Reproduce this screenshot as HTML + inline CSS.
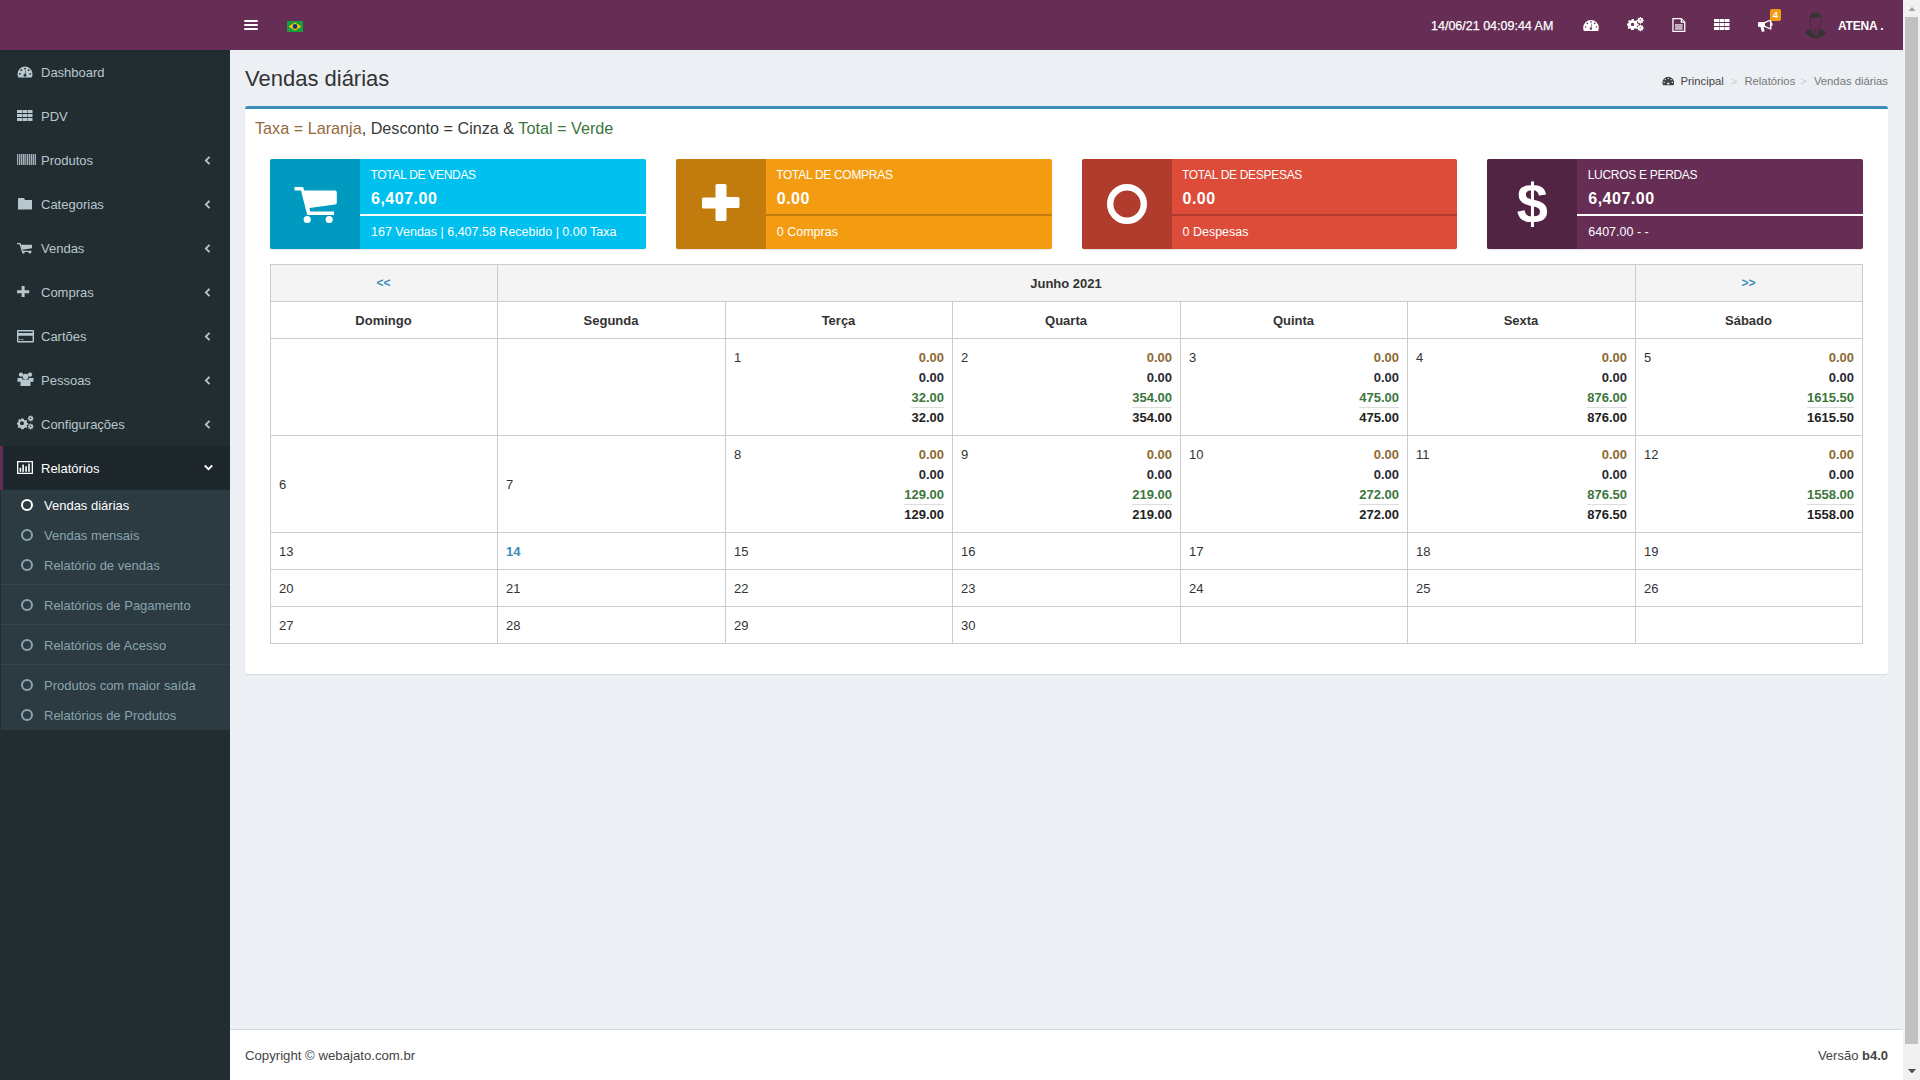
<!DOCTYPE html>
<html><head><meta charset="utf-8">
<style>
*{box-sizing:border-box;margin:0;padding:0}
html,body{width:1920px;height:1080px;overflow:hidden;background:#ecf0f5;font-family:"Liberation Sans",sans-serif;color:#333}
.abs{position:absolute}
#hdr{position:absolute;left:0;top:0;width:1903px;height:50px;background:#662d55}
#side{position:absolute;left:0;top:50px;width:230px;height:1030px;background:#222d32}
#content{position:absolute;left:230px;top:50px;width:1673px;height:979px;background:#ecf0f5}
#foot{position:absolute;left:230px;top:1029px;width:1673px;height:51px;background:#fff;border-top:1px solid #d2d6de}
#sb{position:absolute;left:1903px;top:0;width:17px;height:1080px;background:#f1f1f1}
#sb .th{position:absolute;left:2px;top:17px;width:13px;height:1027px;background:#c1c1c1}
.mi{position:absolute;left:0;width:230px;height:44px;color:#b8c7ce;font-size:13px}
.mi .t{position:absolute;left:41px;top:16px;line-height:14px}
.mi svg.ic{position:absolute;left:17px}
.mi .ang{position:absolute;left:204px;top:18px}
.sub{position:absolute;left:-1px;width:230px;height:30px;color:#8aa4af;font-size:13px}
.sub .t{position:absolute;left:44px;top:9px;line-height:14px}
.sub .c{position:absolute;left:21px;top:9px;width:12px;height:12px;border:2px solid #8aa4af;border-radius:50%}
.ib{position:absolute;top:159px;width:375.75px;height:90px;border-radius:2px;color:#fff;box-shadow:0 1px 1px rgba(0,0,0,.1)}
.ib .icn{position:absolute;left:0;top:0;width:90px;height:90px;background:rgba(0,0,0,.2);border-radius:2px 0 0 2px}
.ib .tx{position:absolute;left:100.5px;top:9px;font-size:12px;letter-spacing:-.3px;line-height:14px;white-space:nowrap}
.ib .num{position:absolute;left:101px;top:31px;font-size:16px;font-weight:bold;letter-spacing:.5px;line-height:18px}
.ib .pb{position:absolute;left:90px;top:55px;right:0;height:2px;background:rgba(0,0,0,.2)}
.ib .pb.w{background:#fff}
.ib .ds{position:absolute;left:101px;top:66px;font-size:12.5px;line-height:14px;white-space:nowrap}
.ct{font-size:13px;line-height:20px;color:#333;white-space:nowrap}
.vals{font-size:13px;line-height:20px;font-weight:bold;text-align:right}
.vals .tot{display:inline-block;border-top:1px solid #ddd;line-height:19px;color:#222}
.vals .g{line-height:19px;color:#3c763d}
.vals .o{color:#8c6a32}
.vals .k{color:#2a2a35}
</style></head>
<body>
<div id="hdr">
  <!-- hamburger -->
  <div class="abs" style="left:244px;top:20px;width:14px;height:2px;background:#fff;border-radius:1px"></div>
  <div class="abs" style="left:244px;top:24px;width:14px;height:2px;background:#fff;border-radius:1px"></div>
  <div class="abs" style="left:244px;top:28px;width:14px;height:2px;background:#fff;border-radius:1px"></div>
  <!-- flag -->
  <svg class="abs" style="left:287px;top:21px" width="16" height="11" viewBox="0 0 16 11"><rect width="16" height="11" fill="#169b3e"/><path d="M8 1.5 L14.3 5.5 L8 9.5 L1.7 5.5Z" fill="#fbd000"/><circle cx="8" cy="5.5" r="2.4" fill="#1a2f8a"/></svg>
  <div class="abs" style="left:1431px;top:19px;font-size:12.5px;color:#fff;line-height:14px;-webkit-text-stroke:.25px #fff">14/06/21 04:09:44 AM</div>
  <svg class="abs" style="left:1583px;top:20px" width="16" height="11" viewBox="0 0 16 11"><path d="M8 0A7.8 7.8 0 0 0 .2 7.8c0 1.1.2 2.1.6 3.2h14.4c.4-1.1.6-2.1.6-3.2A7.8 7.8 0 0 0 8 0z" fill="#fff"/><g fill="#662d55"><circle cx="8" cy="1.9" r=".8"/><circle cx="4.3" cy="3.4" r=".8"/><circle cx="11.7" cy="3.4" r=".8"/><circle cx="2.6" cy="7" r=".8"/><circle cx="13.4" cy="7" r=".8"/><circle cx="7.9" cy="8.6" r="1.2"/><path d="M7.5 8.6l1-5.2.4.1-.6 5.2z"/></g></svg>
  <svg class="abs" style="left:1627px;top:17px" width="17" height="15" viewBox="0 0 17 15"><g fill="#fff" fill-rule="evenodd"><path d="M5.4 1.9l1.3.2.4 1.3 1.1.5 1.2-.6 1 .9-.6 1.2.5 1.1 1.3.4v1.4l-1.3.4-.5 1.1.6 1.2-1 .9-1.2-.6-1.1.5-.4 1.3H4.2l-.4-1.3-1.1-.5-1.2.6-.9-.9.6-1.2-.5-1.1L0 8.1V6.7l1.3-.4.5-1.1-.6-1.2.9-.9 1.2.6 1.1-.5.4-1.3zM5.5 5.7a1.7 1.7 0 1 0 .1 3.4A1.7 1.7 0 0 0 5.5 5.7z"/><path d="M13.2 0l.7.1.2.8.7.3.7-.4.6.5-.4.7.3.7.8.2v1l-.8.2-.3.7.4.7-.6.5-.7-.4-.7.3-.2.8h-1l-.2-.8-.7-.3-.7.4-.6-.5.4-.7-.3-.7-.8-.2v-1l.8-.2.3-.7-.4-.7.6-.5.7.4.7-.3.2-.8zM13.2 2.3a.6.6 0 1 0 0 1.2.6.6 0 0 0 0-1.2z"/><path d="M13.2 7.6l.7.1.2.8.7.3.7-.4.6.5-.4.7.3.7.8.2v1l-.8.2-.3.7.4.7-.6.5-.7-.4-.7.3-.2.8h-1l-.2-.8-.7-.3-.7.4-.6-.5.4-.7-.3-.7-.8-.2v-1l.8-.2.3-.7-.4-.7.6-.5.7.4.7-.3.2-.8zm0 2.3a.6.6 0 1 0 0 1.2.6.6 0 0 0 0-1.2z"/></g></svg>
  <svg class="abs" style="left:1672px;top:18px" width="14" height="14" viewBox="0 0 14 14"><path d="M.3 0h9.2l3.9 3.9V14H.3zM1.6 1.3v11.4h10.5V4.7H8.7V1.3zM10 1.9v1.7h1.7z" fill="#fff" fill-rule="evenodd"/><g fill="#fff"><rect x="3" y="6.3" width="7.6" height="1.2"/><rect x="3" y="8.3" width="7.6" height="1.2"/><rect x="3" y="10.3" width="7.6" height="1.2"/></g></svg>
  <svg class="abs" style="left:1714px;top:19px" width="16" height="11" viewBox="0 0 16 11"><g fill="#fff"><rect x="0" y="0" width="5" height="3"/><rect x="5.5" y="0" width="4.5" height="3"/><rect x="10.5" y="0" width="5" height="3"/><rect x="0" y="4" width="5" height="3"/><rect x="5.5" y="4" width="4.5" height="3"/><rect x="10.5" y="4" width="5" height="3"/><rect x="0" y="8" width="5" height="3"/><rect x="5.5" y="8" width="4.5" height="3"/><rect x="10.5" y="8" width="5" height="3"/></g></svg>
  <svg class="abs" style="left:1758px;top:19px" width="16" height="13" viewBox="0 0 16 13"><path d="M12.2 0.4l1.3 0v3.3a1.6 1.6 0 0 1 0 3.1V10.4h-1.3L6.4 8H5.6l.9 3.6a.9.9 0 0 1-.9 1.1H4.4a.9.9 0 0 1-.9-.7L2.6 8H1.2A1.2 1.2 0 0 1 0 6.8V4.2A1.2 1.2 0 0 1 1.2 3h5.2zM11.9 2L7 4.3v2.4l4.9 2.3z" fill="#fff" fill-rule="evenodd"/></svg>
  <div class="abs" style="left:1770px;top:9px;width:11px;height:12px;background:#f39c12;border-radius:2px;color:#fff;font-size:9.5px;font-weight:bold;line-height:12px;text-align:center">4</div>
  <svg class="abs" style="left:1804px;top:12px" width="23" height="27" viewBox="0 0 23 27"><path d="M5.6 8C5 3 7.8.4 11.5.4S18 3 17.4 8c-.4-1.4-1.2-2.4-2.4-2.7-1.6.7-3.6 1-6.2.7-1.5.2-2.6.8-3.2 2z" fill="#353535"/><path d="M6 8c-.4 3 .3 6 2.4 8.2 1.8 1.7 4.4 1.7 6.2 0 2.1-2.2 2.8-5.2 2.4-8.2" stroke="#3b2a36" stroke-width=".7" fill="none"/><path d="M1 20.6c1.2-2 3.4-3 6.2-3.6l4.3 8.4 4.3-8.4c2.8.6 5 1.6 6.2 3.6-2.2 3.3-6 5.6-10.5 5.6S3.2 23.9 1 20.6z" fill="#353535"/><path d="M10.7 18.6l.8 6.8.8-6.8-.8-1z" fill="#4a2a40"/></svg>
  <div class="abs" style="left:1838px;top:19px;font-size:12px;color:#fff;line-height:14px;font-weight:bold;letter-spacing:-.2px;white-space:nowrap">ATENA .</div>
</div>

<div id="side">
<div class="mi" style="top:0px"><svg class="ic" style="top:16px" width="16" height="12" viewBox="0 0 16 12"><path d="M8 0.5A7.5 7.5 0 0 0 0.5 8c0 1.2.3 2.4.8 3.5h13.4c.5-1.1.8-2.3.8-3.5A7.5 7.5 0 0 0 8 0.5z" fill="#b8c7ce"/><circle cx="8" cy="2.6" r="0.9" fill="#222d32"/><circle cx="4.3" cy="4.2" r="0.9" fill="#222d32"/><circle cx="11.7" cy="4.2" r="0.9" fill="#222d32"/><circle cx="2.8" cy="7.8" r="0.9" fill="#222d32"/><circle cx="13.2" cy="7.8" r="0.9" fill="#222d32"/><circle cx="8" cy="9.3" r="1.4" fill="#222d32"/><path d="M7.6 9.2 L8.7 3.8 L9 3.9 L8.5 9.3Z" fill="#222d32"/></svg><span class="t">Dashboard</span></div>
<div class="mi" style="top:44px"><svg class="ic" style="top:16px" width="16" height="12" viewBox="0 0 16 12"><g fill="#b8c7ce"><rect x="0" y="0" width="5" height="3"/><rect x="5.5" y="0" width="4.5" height="3"/><rect x="10.5" y="0" width="5" height="3"/><rect x="0" y="4" width="5" height="3"/><rect x="5.5" y="4" width="4.5" height="3"/><rect x="10.5" y="4" width="5" height="3"/><rect x="0" y="8" width="5" height="3"/><rect x="5.5" y="8" width="4.5" height="3"/><rect x="10.5" y="8" width="5" height="3"/></g></svg><span class="t">PDV</span></div>
<div class="mi" style="top:88px"><svg class="ic" style="top:16px" width="19" height="12" viewBox="0 0 19 12"><g fill="#b8c7ce" opacity="0.85"><rect x="0" y="0" width="1" height="11"/><rect x="1.8" y="0" width="1.6" height="11"/><rect x="4" y="0" width="1" height="11"/><rect x="5.6" y="0" width="2" height="11"/><rect x="8.2" y="0" width="1" height="11"/><rect x="9.8" y="0" width="1.5" height="11"/><rect x="12" y="0" width="1" height="11"/><rect x="13.6" y="0" width="1.8" height="11"/><rect x="16" y="0" width="1" height="11"/><rect x="17.6" y="0" width="1.4" height="11"/></g></svg><span class="t">Produtos</span><svg class="ang" width="7" height="9" viewBox="0 0 7 9"><path d="M5.5 0.8 L1.8 4.5 L5.5 8.2" stroke="#b8c7ce" stroke-width="1.8" fill="none"/></svg></div>
<div class="mi" style="top:132px"><svg class="ic" style="top:16px;left:18px" width="14" height="12" viewBox="0 0 14 12"><path d="M0.6 0h5.4l1 2h6.4a.6.6 0 0 1 .6.6v8.4a.6.6 0 0 1-.6.6H0.6a.6.6 0 0 1-.6-.6V.6A.6.6 0 0 1 .6 0z" fill="#b8c7ce"/></svg><span class="t">Categorias</span><svg class="ang" width="7" height="9" viewBox="0 0 7 9"><path d="M5.5 0.8 L1.8 4.5 L5.5 8.2" stroke="#b8c7ce" stroke-width="1.8" fill="none"/></svg></div>
<div class="mi" style="top:176px"><svg class="ic" style="top:16px" width="16" height="12" viewBox="0 0 16 12"><path d="M0 1h3.5l2.4 7.8h8.6v1.2H5L2.6 2.2H0z" fill="#b8c7ce"/><path d="M3.8 2.8h11.2v3.4l-9.4 1.6z" fill="#b8c7ce"/><rect x="5" y="9" width="2.6" height="2.6" rx="1" fill="#b8c7ce"/><rect x="11.6" y="9" width="2.6" height="2.6" rx="1" fill="#b8c7ce"/></svg><span class="t">Vendas</span><svg class="ang" width="7" height="9" viewBox="0 0 7 9"><path d="M5.5 0.8 L1.8 4.5 L5.5 8.2" stroke="#b8c7ce" stroke-width="1.8" fill="none"/></svg></div>
<div class="mi" style="top:220px"><svg class="ic" style="top:16px" width="13" height="12" viewBox="0 0 13 12"><path d="M4.6 0h3v4.3h4.6v2.9H7.6V11h-3V7.2H0V4.3h4.6z" fill="#b8c7ce"/></svg><span class="t">Compras</span><svg class="ang" width="7" height="9" viewBox="0 0 7 9"><path d="M5.5 0.8 L1.8 4.5 L5.5 8.2" stroke="#b8c7ce" stroke-width="1.8" fill="none"/></svg></div>
<div class="mi" style="top:264px"><svg class="ic" style="top:16px" width="17" height="13" viewBox="0 0 17 13"><path d="M1 0h15a1 1 0 0 1 1 1v10.5a1 1 0 0 1-1 1H1a1 1 0 0 1-1-1V1a1 1 0 0 1 1-1zM1.4 1.4v1.6h14.2V1.4zm0 4.4v5.3h14.2V5.8zM2 9h1.4v.8H2zm2 0h2.4v.8H4z" fill="#b8c7ce" fill-rule="evenodd"/></svg><span class="t">Cartões</span><svg class="ang" width="7" height="9" viewBox="0 0 7 9"><path d="M5.5 0.8 L1.8 4.5 L5.5 8.2" stroke="#b8c7ce" stroke-width="1.8" fill="none"/></svg></div>
<div class="mi" style="top:308px"><svg class="ic" style="top:14px" width="17" height="15" viewBox="0 0 17 15"><g fill="#b8c7ce"><circle cx="4" cy="2.6" r="2.2"/><circle cx="13" cy="2.6" r="2.2"/><circle cx="8.5" cy="4.6" r="2.8"/><path d="M0.5 6h5a3.5 3.5 0 0 0 0 3.8H0.5z"/><path d="M11.5 6h5v3.8h-5a3.5 3.5 0 0 0 0-3.8z"/><path d="M3.5 9.5a2 2 0 0 1 2-2h6a2 2 0 0 1 2 2v4.5h-10z"/></g></svg><span class="t">Pessoas</span><svg class="ang" width="7" height="9" viewBox="0 0 7 9"><path d="M5.5 0.8 L1.8 4.5 L5.5 8.2" stroke="#b8c7ce" stroke-width="1.8" fill="none"/></svg></div>
<div class="mi" style="top:352px"><svg class="ic" style="top:13px" width="17" height="16" viewBox="0 0 17 16"><g fill="#b8c7ce"><path d="M5.5 3.5l1.2.2.4 1.2 1.1.5 1.1-.6.9.9-.6 1.1.5 1.1 1.2.4v1.3l-1.2.4-.5 1.1.6 1.1-.9.9-1.1-.6-1.1.5-.4 1.2H4.2l-.4-1.2-1.1-.5-1.1.6-.9-.9.6-1.1-.5-1.1L0 9V7.7l1.2-.4.5-1.1-.6-1.1.9-.9 1.1.6 1.1-.5.4-1.2zM4.9 6.3a2 2 0 1 0 .1 4 2 2 0 0 0-.1-4z" fill-rule="evenodd"/><path d="M13.5 0.5l.6.1.2.6.6.3.6-.3.5.5-.3.6.3.6.6.2v.8l-.6.2-.3.6.3.6-.5.5-.6-.3-.6.3-.2.6h-.8l-.2-.6-.6-.3-.6.3-.5-.5.3-.6-.3-.6-.6-.2V2.9l.6-.2.3-.6-.3-.6.5-.5.6.3.6-.3.2-.6zM13.5 2.5a.8.8 0 1 0 0 1.6.8.8 0 0 0 0-1.6z" fill-rule="evenodd"/><path d="M13.5 8.5l.6.1.2.6.6.3.6-.3.5.5-.3.6.3.6.6.2v.8l-.6.2-.3.6.3.6-.5.5-.6-.3-.6.3-.2.6h-.8l-.2-.6-.6-.3-.6.3-.5-.5.3-.6-.3-.6-.6-.2v-.8l.6-.2.3-.6-.3-.6.5-.5.6.3.6-.3.2-.6zM13.5 10.5a.8.8 0 1 0 0 1.6.8.8 0 0 0 0-1.6z" fill-rule="evenodd"/></g></svg><span class="t">Configurações</span><svg class="ang" width="7" height="9" viewBox="0 0 7 9"><path d="M5.5 0.8 L1.8 4.5 L5.5 8.2" stroke="#b8c7ce" stroke-width="1.8" fill="none"/></svg></div>
<div class="mi" style="top:396px;background:#1e282c;color:#fff;border-left:3px solid #662d55"><svg class="ic" style="top:15px;left:14px" width="17" height="13" viewBox="0 0 17 13"><path d="M0 0h16v13H0zM1.3 1.3v10.4h13.4V1.3z" fill="#fff" fill-rule="evenodd"/><g fill="#fff"><rect x="2.6" y="6.8" width="1.6" height="4"/><rect x="5.3" y="3.6" width="1.6" height="7.2"/><rect x="8.3" y="5.2" width="1.6" height="5.6"/><rect x="11.2" y="2.6" width="1.6" height="8.2"/></g></svg><span class="t" style="left:38px">Relatórios</span><svg class="ang" style="left:201px;top:18px" width="9" height="7" viewBox="0 0 9 7"><path d="M0.8 1.5 L4.5 5.2 L8.2 1.5" stroke="#fff" stroke-width="1.8" fill="none"/></svg></div>
<div class="abs" style="left:1px;top:440px;width:229px;height:240px;background:#2c3b41"><div class="sub" style="top:0px;color:#fff"><span class="c" style="border-color:#fff"></span><span class="t">Vendas diárias</span></div><div class="sub" style="top:30px;color:#8aa4af"><span class="c" style="border-color:#8aa4af"></span><span class="t">Vendas mensais</span></div><div class="sub" style="top:60px;color:#8aa4af"><span class="c" style="border-color:#8aa4af"></span><span class="t">Relatório de vendas</span></div><div class="sub" style="top:100px;color:#8aa4af"><span class="c" style="border-color:#8aa4af"></span><span class="t">Relatórios de Pagamento</span></div><div class="sub" style="top:140px;color:#8aa4af"><span class="c" style="border-color:#8aa4af"></span><span class="t">Relatórios de Acesso</span></div><div class="sub" style="top:180px;color:#8aa4af"><span class="c" style="border-color:#8aa4af"></span><span class="t">Produtos com maior saída</span></div><div class="sub" style="top:210px;color:#8aa4af"><span class="c" style="border-color:#8aa4af"></span><span class="t">Relatórios de Produtos</span></div><div class="abs" style="left:0;top:94px;width:229px;height:1px;background:#30474f"></div><div class="abs" style="left:0;top:134px;width:229px;height:1px;background:#30474f"></div><div class="abs" style="left:0;top:174px;width:229px;height:1px;background:#30474f"></div></div>
</div>

<div id="content">
  <div class="abs" style="left:15px;top:17px;font-size:22px;line-height:24px;color:#333">Vendas diárias</div>
  <div class="abs" id="bc" style="right:15px;top:24px;font-size:11.3px;line-height:14px;color:#444;white-space:nowrap">
    <svg style="vertical-align:-1px;margin-right:6px" width="12.5" height="10" viewBox="0 0 16 12"><path d="M8 0.5A7.5 7.5 0 0 0 0.5 8c0 1.2.3 2.4.8 3.5h13.4c.5-1.1.8-2.3.8-3.5A7.5 7.5 0 0 0 8 0.5z" fill="#444"/><circle cx="8" cy="2.6" r="0.9" fill="#ecf0f5"/><circle cx="4.3" cy="4.2" r="0.9" fill="#ecf0f5"/><circle cx="11.7" cy="4.2" r="0.9" fill="#ecf0f5"/><circle cx="2.8" cy="7.8" r="0.9" fill="#ecf0f5"/><circle cx="13.2" cy="7.8" r="0.9" fill="#ecf0f5"/><circle cx="8" cy="9.3" r="1.4" fill="#ecf0f5"/></svg>Principal<span style="color:#ccc;padding:0 7px 0 7px">&gt;</span><span style="color:#777">Relatórios</span><span style="color:#ccc;padding:0 7px 0 5px">&gt;</span><span style="color:#777">Vendas diárias</span>
  </div>
  <div class="abs" id="box" style="left:15px;top:56px;width:1643px;height:568px;background:#fff;border-top:3px solid #3c8dbc;border-radius:3px;box-shadow:0 1px 1px rgba(0,0,0,.1)">
    <div class="abs" style="left:10px;top:9px;font-size:16.2px;line-height:20px;color:#3a3a3a;white-space:nowrap"><span style="color:#94693a">Taxa = Laranja</span>, Desconto = Cinza &amp; <span style="color:#3c763d">Total = Verde</span></div>
  </div>
</div>

<!-- infoboxes -->
<div class="ib" style="left:270px;background:#00c0ef"><div class="icn"><svg class="abs" style="left:23px;top:28px" width="45" height="37" viewBox="0 0 45 37"><path d="M1.5 0h8.5l1.4 3.5H42a1.8 1.8 0 0 1 1.8 1.8v10.4a1.8 1.8 0 0 1-1.6 1.8L16.5 21l.7 3.4h23.8V28H14.2L8 3.4H1.5z" fill="#fff"/><circle cx="14.2" cy="32.5" r="3.6" fill="#fff"/><circle cx="36.2" cy="32.5" r="3.6" fill="#fff"/></svg></div><div class="tx">TOTAL DE VENDAS</div><div class="num">6,407.00</div><div class="pb w"></div><div class="ds">167 Vendas | 6,407.58 Recebido | 0.00 Taxa</div></div>
<div class="ib" style="left:675.75px;background:#f39c12"><div class="icn"><svg class="abs" style="left:26px;top:25px" width="38" height="37" viewBox="0 0 38 37"><path d="M13.5 1.5a1.5 1.5 0 0 1 1.5-1.5h8a1.5 1.5 0 0 1 1.5 1.5v11.5h11.5a1.5 1.5 0 0 1 1.5 1.5v8a1.5 1.5 0 0 1-1.5 1.5H24.5v11.5a1.5 1.5 0 0 1-1.5 1.5h-8a1.5 1.5 0 0 1-1.5-1.5V24.5H1.5A1.5 1.5 0 0 1 0 23v-8a1.5 1.5 0 0 1 1.5-1.5h12z" fill="#fff"/></svg></div><div class="tx">TOTAL DE COMPRAS</div><div class="num">0.00</div><div class="pb"></div><div class="ds">0 Compras</div></div>
<div class="ib" style="left:1081.5px;background:#dd4b39"><div class="icn"><svg class="abs" style="left:24px;top:24px" width="42" height="42" viewBox="0 0 42 42"><circle cx="21" cy="21" r="16.8" stroke="#fff" stroke-width="6.4" fill="none"/></svg></div><div class="tx">TOTAL DE DESPESAS</div><div class="num">0.00</div><div class="pb"></div><div class="ds">0 Despesas</div></div>
<div class="ib" style="left:1487.25px;background:#662d55"><div class="icn"><div class="abs" style="left:0;top:0;width:90px;height:90px;text-align:center;font-size:56px;line-height:90px;font-weight:bold;color:#fff">$</div></div><div class="tx">LUCROS E PERDAS</div><div class="num">6,407.00</div><div class="pb w"></div><div class="ds">6407.00 - -</div></div>
<!-- calendar -->
<div class="abs" style="left:271px;top:265px;width:1591px;height:36px;background:#f4f4f4"></div>
<div class="abs" style="left:270px;top:264px;width:1593px;height:1px;background:#cccccc"></div>
<div class="abs" style="left:270px;top:301px;width:1593px;height:1px;background:#cccccc"></div>
<div class="abs" style="left:270px;top:338px;width:1593px;height:1px;background:#cccccc"></div>
<div class="abs" style="left:270px;top:435px;width:1593px;height:1px;background:#cccccc"></div>
<div class="abs" style="left:270px;top:532px;width:1593px;height:1px;background:#cccccc"></div>
<div class="abs" style="left:270px;top:569px;width:1593px;height:1px;background:#cccccc"></div>
<div class="abs" style="left:270px;top:606px;width:1593px;height:1px;background:#cccccc"></div>
<div class="abs" style="left:270px;top:643px;width:1593px;height:1px;background:#cccccc"></div>
<div class="abs" style="left:270px;top:264px;width:1px;height:380px;background:#cccccc"></div>
<div class="abs" style="left:497px;top:264px;width:1px;height:380px;background:#cccccc"></div>
<div class="abs" style="left:725px;top:301px;width:1px;height:343px;background:#cccccc"></div>
<div class="abs" style="left:952px;top:301px;width:1px;height:343px;background:#cccccc"></div>
<div class="abs" style="left:1180px;top:301px;width:1px;height:343px;background:#cccccc"></div>
<div class="abs" style="left:1407px;top:301px;width:1px;height:343px;background:#cccccc"></div>
<div class="abs" style="left:1635px;top:264px;width:1px;height:380px;background:#cccccc"></div>
<div class="abs" style="left:1862px;top:264px;width:1px;height:380px;background:#cccccc"></div>
<div class="abs ct" style="left:270px;width:227px;top:273px;text-align:center;color:#3c8dbc;font-weight:bold;font-size:12px">&lt;&lt;</div>
<div class="abs ct" style="left:1635px;width:227px;top:273px;text-align:center;color:#3c8dbc;font-weight:bold;font-size:12px">&gt;&gt;</div>
<div class="abs ct" style="left:497px;width:1138px;top:274px;text-align:center;font-weight:bold">Junho 2021</div>
<div class="abs ct" style="left:270px;width:227px;top:311px;text-align:center;font-weight:bold">Domingo</div>
<div class="abs ct" style="left:497px;width:228px;top:311px;text-align:center;font-weight:bold">Segunda</div>
<div class="abs ct" style="left:725px;width:227px;top:311px;text-align:center;font-weight:bold">Terça</div>
<div class="abs ct" style="left:952px;width:228px;top:311px;text-align:center;font-weight:bold">Quarta</div>
<div class="abs ct" style="left:1180px;width:227px;top:311px;text-align:center;font-weight:bold">Quinta</div>
<div class="abs ct" style="left:1407px;width:228px;top:311px;text-align:center;font-weight:bold">Sexta</div>
<div class="abs ct" style="left:1635px;width:227px;top:311px;text-align:center;font-weight:bold">Sábado</div>
<div class="abs ct" style="left:734px;top:348px">1</div>
<div class="abs vals" style="right:976px;top:348px"><div class="o">0.00</div><div class="k">0.00</div><div class="g">32.00</div><div class="tot">32.00</div></div>
<div class="abs ct" style="left:961px;top:348px">2</div>
<div class="abs vals" style="right:748px;top:348px"><div class="o">0.00</div><div class="k">0.00</div><div class="g">354.00</div><div class="tot">354.00</div></div>
<div class="abs ct" style="left:1189px;top:348px">3</div>
<div class="abs vals" style="right:521px;top:348px"><div class="o">0.00</div><div class="k">0.00</div><div class="g">475.00</div><div class="tot">475.00</div></div>
<div class="abs ct" style="left:1416px;top:348px">4</div>
<div class="abs vals" style="right:293px;top:348px"><div class="o">0.00</div><div class="k">0.00</div><div class="g">876.00</div><div class="tot">876.00</div></div>
<div class="abs ct" style="left:1644px;top:348px">5</div>
<div class="abs vals" style="right:66px;top:348px"><div class="o">0.00</div><div class="k">0.00</div><div class="g">1615.50</div><div class="tot">1615.50</div></div>
<div class="abs ct" style="left:734px;top:445px">8</div>
<div class="abs vals" style="right:976px;top:445px"><div class="o">0.00</div><div class="k">0.00</div><div class="g">129.00</div><div class="tot">129.00</div></div>
<div class="abs ct" style="left:961px;top:445px">9</div>
<div class="abs vals" style="right:748px;top:445px"><div class="o">0.00</div><div class="k">0.00</div><div class="g">219.00</div><div class="tot">219.00</div></div>
<div class="abs ct" style="left:1189px;top:445px">10</div>
<div class="abs vals" style="right:521px;top:445px"><div class="o">0.00</div><div class="k">0.00</div><div class="g">272.00</div><div class="tot">272.00</div></div>
<div class="abs ct" style="left:1416px;top:445px">11</div>
<div class="abs vals" style="right:293px;top:445px"><div class="o">0.00</div><div class="k">0.00</div><div class="g">876.50</div><div class="tot">876.50</div></div>
<div class="abs ct" style="left:1644px;top:445px">12</div>
<div class="abs vals" style="right:66px;top:445px"><div class="o">0.00</div><div class="k">0.00</div><div class="g">1558.00</div><div class="tot">1558.00</div></div>
<div class="abs ct" style="left:279px;top:475px">6</div>
<div class="abs ct" style="left:506px;top:475px">7</div>
<div class="abs ct" style="left:279px;top:542px"><span>13</span></div>
<div class="abs ct" style="left:506px;top:542px"><span style="color:#3c8dbc;font-weight:bold">14</span></div>
<div class="abs ct" style="left:734px;top:542px"><span>15</span></div>
<div class="abs ct" style="left:961px;top:542px"><span>16</span></div>
<div class="abs ct" style="left:1189px;top:542px"><span>17</span></div>
<div class="abs ct" style="left:1416px;top:542px"><span>18</span></div>
<div class="abs ct" style="left:1644px;top:542px"><span>19</span></div>
<div class="abs ct" style="left:279px;top:579px"><span>20</span></div>
<div class="abs ct" style="left:506px;top:579px"><span>21</span></div>
<div class="abs ct" style="left:734px;top:579px"><span>22</span></div>
<div class="abs ct" style="left:961px;top:579px"><span>23</span></div>
<div class="abs ct" style="left:1189px;top:579px"><span>24</span></div>
<div class="abs ct" style="left:1416px;top:579px"><span>25</span></div>
<div class="abs ct" style="left:1644px;top:579px"><span>26</span></div>
<div class="abs ct" style="left:279px;top:616px"><span>27</span></div>
<div class="abs ct" style="left:506px;top:616px"><span>28</span></div>
<div class="abs ct" style="left:734px;top:616px"><span>29</span></div>
<div class="abs ct" style="left:961px;top:616px"><span>30</span></div>

<div id="foot">
  <div class="abs" style="left:15px;top:18px;font-size:13.2px;line-height:15px;color:#444;white-space:nowrap">Copyright © webajato.com.br</div>
  <div class="abs" style="right:15px;top:18px;font-size:13px;line-height:15px;color:#444;white-space:nowrap">Versão <b>b4.0</b></div>
</div>

<div id="sb"><div class="th"></div>
  <svg class="abs" style="left:4.5px;top:6.5px" width="8" height="4.5"><path d="M0 4.5 L4 0 L8 4.5Z" fill="#a3a3a3"/></svg>
  <svg class="abs" style="left:4.5px;top:1068.5px" width="8" height="4.5"><path d="M0 0 L4 4.5 L8 0Z" fill="#505050"/></svg>
</div>
</body></html>
